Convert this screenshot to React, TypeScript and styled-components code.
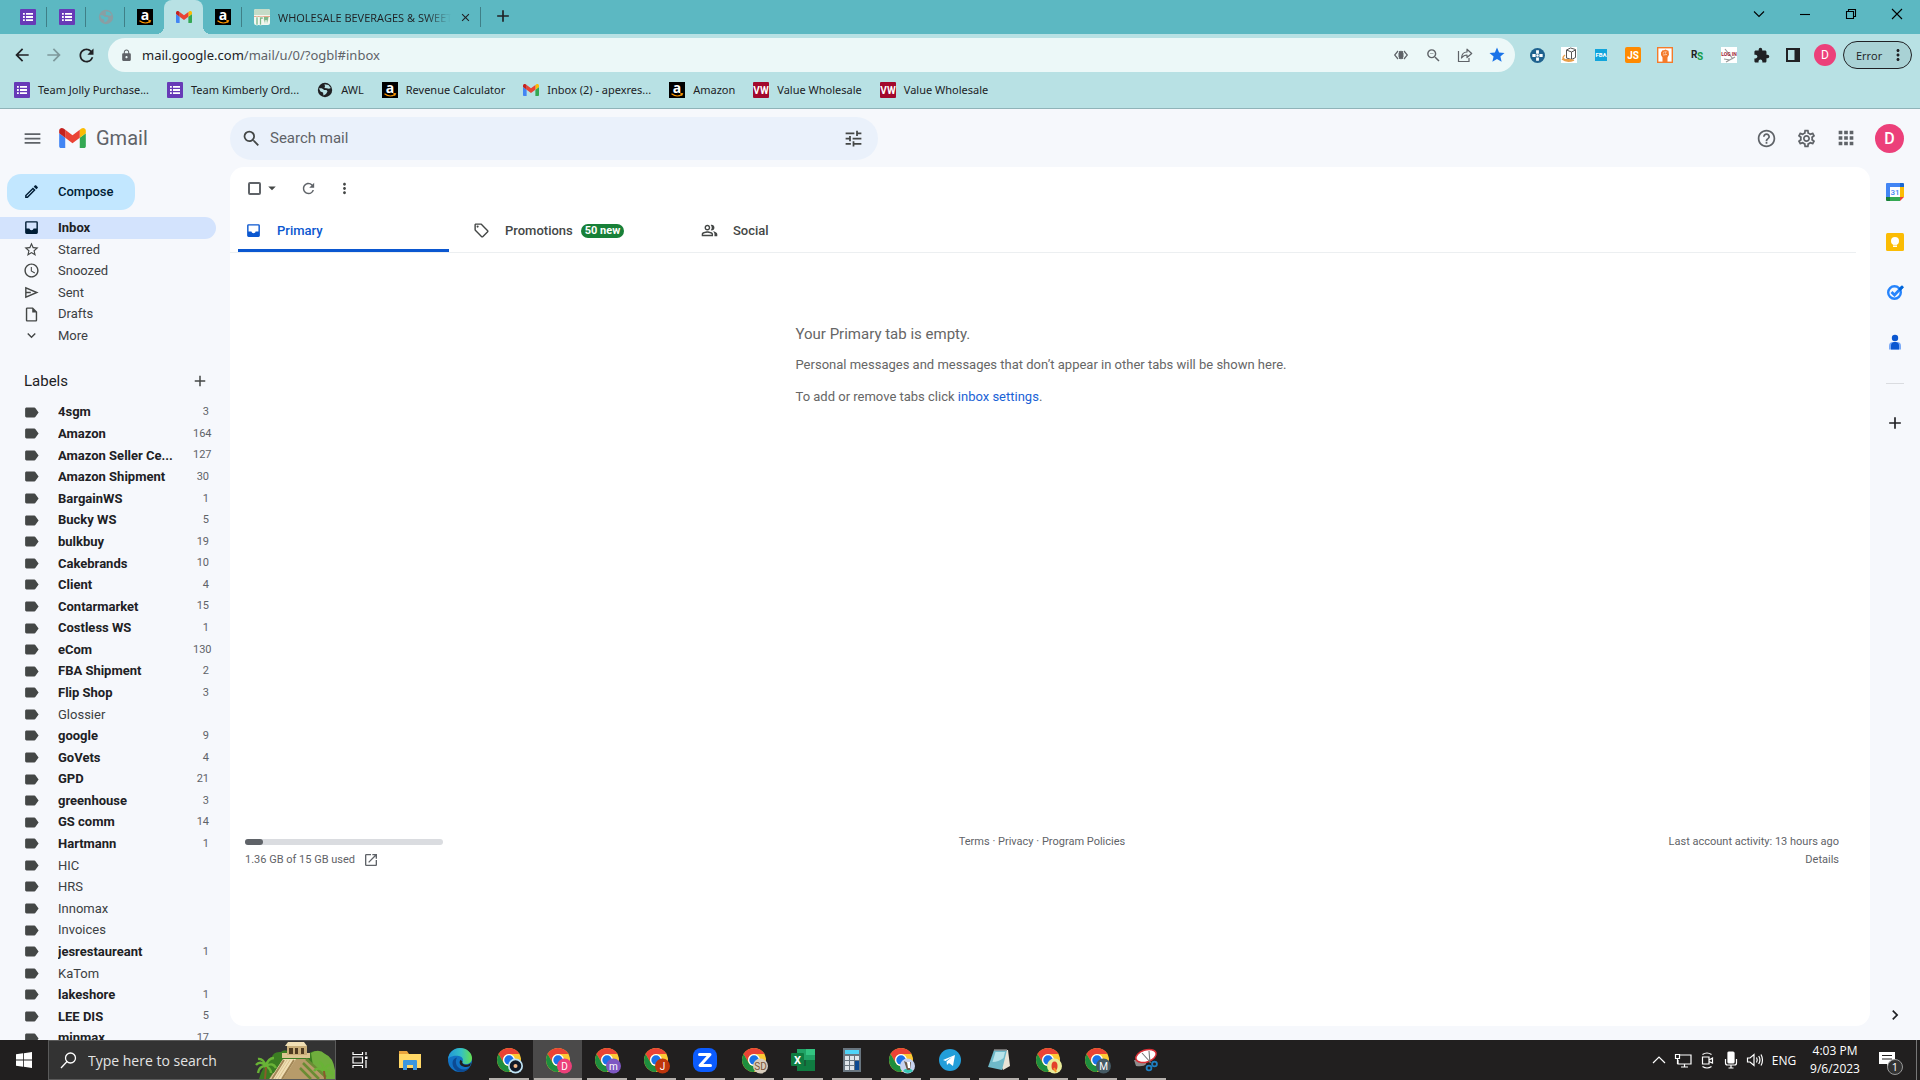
import React from "react";
import styled, { createGlobalStyle, css } from "styled-components";
import {
  MdMenu, MdSearch, MdTune, MdHelpOutline, MdOutlineSettings, MdApps, MdStarBorder, MdAccessTime,
  MdOutlineInsertDriveFile, MdExpandMore, MdAdd, MdLabel, MdRefresh, MdMoreVert, MdArrowDropDown,
  MdOutlineLocalOffer, MdOutlinePeopleAlt, MdOpenInNew, MdChevronRight, MdLock, MdArrowBack, MdArrowForward,
  MdExtension, MdStar, MdOutlineCreate, MdClose, MdOutlineZoomOut,
} from "react-icons/md";

const browserFont = `"Noto Sans", "Open Sans", sans-serif`;
const systemFont = `"Open Sans", "Noto Sans", sans-serif`;
const product = `Roboto, "Liberation Sans", sans-serif`;

const Global = createGlobalStyle`
  *, *::before, *::after { box-sizing: border-box; }
  html, body { margin: 0; padding: 0; }
  body { overflow: hidden; font-family: ${product}; }
  button, input { font: inherit; color: inherit; margin: 0; padding: 0; border: 0; background: none; }
  button { cursor: pointer; }
  input { outline: none; min-width: 0; }
  a { text-decoration: none; color: inherit; }
  svg { display: block; flex: none; overflow: visible; }
`;

/* ---------- shared ---------- */
const Screen = styled.div`
  height: 100vh;
  display: flex;
  flex-direction: column;
`;
const center = css`
  display: flex;
  align-items: center;
  justify-content: center;
`;
const Slot = styled.button<{ $w: number; $color?: string }>`
  ${center}
  width: ${(p) => p.$w}px;
  height: 32px;
  flex: none;
  color: ${(p) => p.$color ?? "#202124"};
`;
const Avatar = styled.span<{ $size: number }>`
  ${center}
  width: ${(p) => p.$size}px;
  height: ${(p) => p.$size}px;
  border-radius: 50%;
  background: #ec407a;
  color: #fff;
  font-family: ${product};
  font-size: ${(p) => (p.$size > 24 ? 16 : 12)}px;
  font-weight: ${(p) => (p.$size > 24 ? 500 : 400)};
`;

/* ---------- browser chrome ---------- */
const TabStrip = styled.div`
  height: 34px;
  display: flex;
  align-items: stretch;
  padding-left: 8px;
  background: #5cb8c2;
  font-family: ${systemFont};
`;
const Tab = styled.button<{ $active?: boolean; $wide?: boolean; $line?: boolean }>`
  position: relative;
  display: flex;
  align-items: center;
  justify-content: ${(p) => (p.$wide ? "flex-start" : "center")};
  gap: 8px;
  width: ${(p) => (p.$wide ? 239 : 39)}px;
  padding: ${(p) => (p.$wide ? "0 9px 0 12px" : "0")};
  color: #202124;
  font-size: 11px;
  background: ${(p) =>
    p.$active
      ? "#b8e1e4"
      : p.$line
        ? "linear-gradient(#3f7f87, #3f7f87) right center / 1px 20px no-repeat"
        : "none"};
  border-radius: ${(p) => (p.$active ? "8px 8px 0 0" : "0")};
  ${(p) =>
    p.$active &&
    css`
      &::before,
      &::after {
        content: "";
        position: absolute;
        bottom: 0;
        width: 8px;
        height: 8px;
      }
      &::before { right: 100%; background: radial-gradient(circle at 0 0, transparent 8px, #b8e1e4 8px); }
      &::after { left: 100%; background: radial-gradient(circle at 100% 0, transparent 8px, #b8e1e4 8px); }
    `}
`;
const TabTitle = styled.span`
  flex: 1;
  overflow: hidden;
  white-space: nowrap;
  text-align: left;
  mask-image: linear-gradient(90deg, #000 85%, transparent);
`;
const Spacer = styled.div`
  flex: 1;
`;
const WinButton = styled.button`
  ${center}
  width: 46px;
  height: 28px;
  color: #000;
`;
const AddressRow = styled.div`
  height: 42px;
  display: flex;
  align-items: center;
  padding: 0 8px 0 6px;
  background: #b8e1e4;
`;
const Omnibox = styled.div`
  flex: 1;
  display: flex;
  align-items: center;
  height: 34px;
  margin: 0 6px;
  padding: 0 2px 0 12px;
  border-radius: 17px;
  background: #ecf8f8;
  font-family: ${browserFont};
  font-size: 13px;
  color: #5f6368;
  svg { color: #5f6368; }
`;
const Url = styled.span`
  flex: 1;
  margin-left: 9px;
  b { font-weight: 400; color: #202124; }
`;
const StarSlot = styled(Slot)`
  svg { color: #1a73e8; }
`;
const ErrorButton = styled.button`
  display: flex;
  align-items: center;
  justify-content: space-between;
  width: 69px;
  height: 28px;
  padding: 0 4px 0 12px;
  margin-left: 2px;
  border: 1px solid #202124;
  border-radius: 14px;
  background: #a9d2d5;
  color: #202124;
  font-family: ${systemFont};
  font-size: 11px;
`;
const Bookmarks = styled.nav`
  height: 33px;
  display: flex;
  align-items: center;
  gap: 18px;
  padding: 0 14px 5px;
  background: #b8e1e4;
  border-bottom: 1px solid #8fb3b8;
  font-family: ${browserFont};
  font-size: 11px;
  color: #202124;
`;
const Bookmark = styled.a`
  display: flex;
  align-items: center;
  gap: 8px;
  white-space: nowrap;
`;

/* ---------- mail ---------- */
const Mail = styled.div`
  flex: 1;
  min-height: 0;
  display: grid;
  grid-template-columns: 230px 1fr 50px;
  grid-template-rows: 58px 1fr;
  overflow: hidden;
  background: #f6f8fc;
  color: #202124;
`;
const Brand = styled.div`
  display: flex;
  align-items: center;
  gap: 11px;
  padding-left: 16px;
`;
const BrandLink = styled.a`
  display: flex;
  align-items: center;
  gap: 10px;
  color: #5f6368;
  font-size: 20px;
`;
const Header = styled.header`
  grid-column: 2 / 4;
  display: flex;
  align-items: center;
  justify-content: space-between;
  padding-right: 16px;
`;
const SearchForm = styled.form`
  display: flex;
  align-items: center;
  flex: 0 1 648px;
  height: 43px;
  padding: 0 6px 0 2px;
  border-radius: 22px;
  background: #eaf1fb;
  input { flex: 1; font-size: 15px; color: #5f6368; }
  input::placeholder { color: #5f6368; opacity: 1; }
`;
const HeaderActions = styled.div`
  display: flex;
  align-items: center;
`;
const AvatarButton = styled.button`
  margin-left: 9px;
`;
const Sidebar = styled.aside`
  min-height: 0;
  overflow: hidden;
  padding-top: 7px;
  font-size: 13px;
`;
const Compose = styled.button`
  display: flex;
  align-items: center;
  gap: 18px;
  height: 36px;
  margin: 0 0 7px 7px;
  padding: 0 21px 2px 16px;
  border-radius: 14px;
  background: #c2e7ff;
  color: #001d35;
  font-weight: 500;
`;
const List = styled.nav`
  margin-right: 14px;
  line-height: 1.66;
`;
const Item = styled.a<{ $active?: boolean; $bold?: boolean }>`
  display: grid;
  grid-template-columns: 17px 117px 1fr;
  column-gap: 18px;
  align-items: center;
  padding: 0 7px 0 23px;
  border-radius: 0 11px 11px 0;
  background: ${(p) => (p.$active ? "#d3e3fd" : "none")};
  color: ${(p) => (p.$active || p.$bold ? "#202124" : "#3c4043")};
  font-weight: ${(p) => (p.$active || p.$bold ? 700 : 400)};
  white-space: nowrap;
  svg { color: ${(p) => (p.$active ? "#001d35" : "#444746")}; }
`;
const Name = styled.span`
  overflow: hidden;
  text-overflow: ellipsis;
`;
const Count = styled.span`
  justify-self: end;
  font-size: 11px;
  line-height: 16px;
  font-weight: 400;
  color: #5f6368;
`;
const LabelsHead = styled.div`
  display: flex;
  align-items: center;
  justify-content: space-between;
  height: 32px;
  margin: 19px 14px 4px 24px;
  h2 { margin: 0; font-size: 15px; font-weight: 400; }
`;
const Panel = styled.main`
  display: flex;
  flex-direction: column;
  margin-bottom: 14px;
  border-radius: 14px;
  background: #fff;
`;
const Tools = styled.div`
  display: flex;
  align-items: center;
  height: 42px;
  padding-left: 18px;
`;
const Check = styled.input`
  appearance: none;
  width: 13px;
  height: 13px;
  border: 2px solid #5f6368;
  border-radius: 2px;
`;
const Categories = styled.div`
  display: flex;
  height: 44px;
  margin-right: 14px;
  padding-left: 8px;
  border-bottom: 1px solid #eceff1;
`;
const Category = styled.button<{ $active?: boolean }>`
  display: flex;
  align-items: center;
  width: 211px;
  margin-right: 17px;
  padding: 3px 0 0 7px;
  border-bottom: 3px solid ${(p) => (p.$active ? "#0b57d0" : "transparent")};
  border-radius: 2px 2px 0 0;
  color: ${(p) => (p.$active ? "#0b57d0" : "#444746")};
  font-size: 13px;
  font-weight: 500;
  span { margin-left: 15px; }
`;
const Badge = styled.em`
  margin-left: 8px;
  padding: 0 4px;
  border-radius: 7px;
  background: #188038;
  color: #fff;
  font-size: 11px;
  line-height: 14px;
  font-style: normal;
  font-weight: 700;
`;
const Content = styled.div`
  margin-right: 23px;
  padding: 0 8px 0 15px;
`;
const Empty = styled.section`
  width: 493px;
  margin: 72px auto 0;
  padding-bottom: 412px;
  color: #666;
  font-size: 13px;
  h3 { margin: 0 0 14px; font-size: 15px; line-height: 18px; font-weight: 400; }
  p { margin: 0 0 16px; line-height: 16px; white-space: nowrap; }
  a { color: #1a62d6; }
`;
const Footer = styled.footer`
  display: grid;
  grid-template-columns: 1fr auto 1fr;
  color: #5f6368;
  font-size: 11px;
  line-height: 18px;
`;
const Meter = styled.div`
  width: 198px;
  height: 6px;
  margin: 6px 0;
  border-radius: 3px;
  background: #dadce0;
`;
const MeterFill = styled.div`
  width: 9%;
  height: 100%;
  border-radius: 3px;
  background: #5f6368;
`;
const Storage = styled.a`
  display: flex;
  align-items: center;
  gap: 8px;
`;
const Activity = styled.div`
  text-align: right;
`;
const Rail = styled.aside`
  display: flex;
  flex-direction: column;
  align-items: center;
`;
const RailButton = styled.button`
  ${center}
  width: 50px;
  height: 50px;
`;
const RailLine = styled.hr`
  width: 18px;
  margin: 16px 0 14px;
  border: 0;
  border-top: 1px solid #dadce0;
`;

/* ---------- taskbar ---------- */
const Taskbar = styled.footer`
  height: 40px;
  flex: none;
  display: flex;
  background: #211f1f;
  color: #fff;
  font-family: ${systemFont};
`;
const TaskButton = styled.button<{ $w?: number; $running?: boolean; $active?: boolean }>`
  ${center}
  width: ${(p) => p.$w ?? 49}px;
  height: 40px;
  background:
    ${(p) => (p.$running ? `linear-gradient(#b5b0ac, #b5b0ac) center bottom / ${p.$active ? 48 : 40}px 2px no-repeat` : "none")},
    ${(p) => (p.$active ? "#4b4a4a" : "transparent")};
`;
const TaskSearch = styled.label`
  display: flex;
  align-items: center;
  width: 288px;
  padding-left: 11px;
  gap: 11px;
  border: 1px solid #5a5a5a;
  background: #333;
  font-size: 14px;
  input { flex: 1; }
  input::placeholder { color: #e4e4e4; opacity: 1; }
`;
const TrayItem = styled.button`
  ${center}
  width: 24px;
  height: 40px;
`;
const Lang = styled.button`
  width: 34px;
  font-size: 12px;
`;
const Clock = styled.div`
  display: flex;
  flex-direction: column;
  justify-content: center;
  width: 68px;
  text-align: center;
  font-size: 12px;
  line-height: 18px;
`;
const Notify = styled.button`
  ${center}
  width: 48px;
  margin-right: 3px;
  padding-right: 5px;
  border-right: 1px solid #777;
`;

/* ---------- drawings ---------- */
const GmailMark = ({ w }: { w: number }) => (
  <svg width={w} height={Math.round(w * 0.75)} viewBox="52 42 88 66">
    <path fill="#4285f4" d="M58 108h14V74L52 59v43c0 3.32 2.69 6 6 6" />
    <path fill="#34a853" d="M120 108h14c3.32 0 6-2.69 6-6V59l-20 15" />
    <path fill="#fbbc04" d="M120 48v26l20-15v-8c0-7.42-8.47-11.65-14.4-7.2" />
    <path fill="#ea4335" d="M72 74V48l24 18 24-18v26L96 92" />
    <path fill="#c5221f" d="M52 51v8l20 15V48l-5.6-4.2c-5.94-4.45-14.4-.22-14.4 7.2" />
  </svg>
);
const FormMark = () => (
  <svg width="16" height="16" viewBox="0 0 16 16">
    <rect width="16" height="16" rx="1" fill="#673ab7" />
    <g fill="#fff"><path d="M3 4h1.8v1.8H3zM3 7.1h1.8v1.8H3zM3 10.2h1.8V12H3zM6 4h7v1.8H6zM6 7.1h7v1.8H6zM6 10.2h7V12H6z" /></g>
  </svg>
);
const Globe = ({ color, land }: { color: string; land: string }) => (
  <svg width="16" height="16" viewBox="0 0 16 16">
    <circle cx="8" cy="8" r="7.200" fill={color} />
    <path d="M2 6.500C4 6 6 6.500 7 8h2.500l1 1.500-1.500 2.500-2.500 1.500-.5-3-2.500-1z" fill={land} />
    <path d="M7.500 2.300l4 .7 2.300 3-1.800.8-2.500-.5-2-.3.500-1.700z" fill={land} />
  </svg>
);
const AmazonMark = () => (
  <svg width="16" height="16" viewBox="0 0 16 16">
    <rect width="16" height="16" fill="#000" />
    <text x="8" y="10.5" fontSize="14" fontWeight="700" fontFamily="Open Sans, sans-serif" textAnchor="middle" fill="#fff">a</text>
    <path d="M2.5 11.8c3.2 2.4 7.5 2.5 10.5.7M11.4 11.6l2.1.2-.8 1.8" fill="none" stroke="#f90" strokeWidth="1.1" />
  </svg>
);
const TextMark = ({ text, bg, fg = "#fff", size = 8, w = 16, h = 16, r = 1 }: { text: string; bg: string; fg?: string; size?: number; w?: number; h?: number; r?: number }) => (
  <svg width={w} height={h} viewBox={`0 0 ${w} ${h}`}>
    <rect width={w} height={h} rx={r} fill={bg} />
    <text x={w / 2} y={h / 2 + size * 0.36} fontSize={size} fontWeight="700" fontFamily="Roboto, sans-serif" textAnchor="middle" fill={fg}>{text}</text>
  </svg>
);
const IrwMark = () => (
  <svg width="16" height="16" viewBox="0 0 16 16">
    <rect width="16" height="16" rx="2" fill="#f3f7ee" />
    <path d="M0 2q0-2 2-2h12q2 0 2 2v4H0z" fill="#c5dcc8" />
    <path d="M0 7.5h16" stroke="#e7a98c" strokeWidth="1" />
    <path d="M2 16V8h2v8zM5.500 16V8h4v2h-2v6zM9 8l2 8 1-5 1 5 2-8" fill="#7db98a" stroke="#fff" strokeWidth=".6" />
  </svg>
);
const Win = ({ d }: { d: string }) => (
  <svg width="12" height="12" viewBox="0 0 12 12" fill="none" stroke="#000" strokeWidth="1.1"><path d={d} /></svg>
);
const Eye = () => (
  <svg width="14" height="14" viewBox="0 0 14 14" fill="none" stroke="currentColor" strokeWidth="1.200">
    <path d="M4 3L.7 7 4 11M10 3l3.300 4-3.300 4" /><path d="M7 2.500L9.500 5v4L7 11.500 4.500 9V5z" fill="currentColor" stroke="none" />
    <path d="M5.700 3v8M8.300 3v8" />
  </svg>
);
const Share = () => (
  <svg width="16" height="16" viewBox="0 0 16 16" fill="none" stroke="currentColor" strokeWidth="1.2">
    <path d="M1.500 4v10.500H12V11" /><path d="M4.500 11c.3-4 2.500-6 5.500-6V2.200L14.700 6.500 10 10.500V8C7.500 8 6 9 4.500 11z" strokeLinejoin="round" />
  </svg>
);
const Compass = () => (
  <svg width="15" height="15" viewBox="0 0 16 16">
    <circle cx="8" cy="8" r="8" fill="#1f628e" />
    <path d="M6.500 2.500h3v3.500h-3zM6.500 10h3v3.500h-3zM2.500 6.500H6v3H2.500zM10 6.500h3.500v3H10z" fill="#fff" />
    <circle cx="8" cy="8" r="1.300" fill="#fff" />
  </svg>
);
const BoxMark = () => (
  <svg width="16" height="16" viewBox="0 0 16 16">
    <rect width="16" height="16" fill="#fff" />
    <path d="M5.500 3l4-2 5 1.500v8l-4 2-5-1.500zM10.500 5v7M5.500 3l5 2 4-2" fill="none" stroke="#555" strokeWidth="1" />
    <path d="M1 12q5 4 12 1M4 8q-4 3 0 4.500l7 .500" fill="none" stroke="#e9a04b" strokeWidth="1.400" />
  </svg>
);
const Fist = () => (
  <svg width="16" height="16" viewBox="0 0 16 16">
    <rect x=".7" y=".7" width="14.600" height="14.600" fill="#fff" stroke="#f47b2a" strokeWidth="1.400" />
    <path d="M4 5.500l1.500-2.300 1.500.1L8.500 2.500l1.500.7 1.500.6.5 4L10.500 10.500V15h-5v-4.500L4 8z" fill="#f47b2a" />
    <path d="M6.300 6.500l1-2M8.500 6.500l.5-2.500M6 8l4-.5" stroke="#fff" strokeWidth=".6" />
  </svg>
);
const RsMark = () => (
  <svg width="16" height="16" viewBox="0 0 16 16" fontFamily="Roboto, sans-serif" fontWeight="700">
    <text x="2" y="11" fontSize="10" fill="#222">R</text><text x="8" y="13" fontSize="10" fill="#139b49">S</text>
  </svg>
);
const LoginMark = () => (
  <svg width="16" height="16" viewBox="0 0 16 16">
    <rect width="16" height="16" fill="#fff" />
    <path d="M14 10L5 15M3 12l6 1M4 2l8 10" stroke="#999" strokeWidth="1.200" />
    <text x="8" y="8.500" fontSize="5" fontWeight="700" fontFamily="Roboto, sans-serif" textAnchor="middle" fill="#9c2033">LOG IN</text>
  </svg>
);
const SidePanel = () => (
  <svg width="14" height="14" viewBox="0 0 14 14"><path fillRule="evenodd" d="M0 0h14v14H0zM2 2v10h6.500V2z" fill="#202124" /></svg>
);
const InboxFilled = ({ size = 17 }: { size?: number }) => (
  <svg width={size} height={size} viewBox="0 0 24 24" fill="currentColor">
    <path fillRule="evenodd" d="M5 3h14q2 0 2 2v14q0 2-2 2H5q-2 0-2-2V5q0-2 2-2zM5 5v8.500h4q.5 2.500 3 2.500t3-2.500h4V5z" />
  </svg>
);
const SendOutline = ({ size = 17 }: { size?: number }) => (
  <svg width={size} height={size} viewBox="0 0 24 24" fill="none" stroke="currentColor" strokeWidth="2">
    <path d="M4 5.500v13L19.500 12zM4 12h7" />
  </svg>
);
const Calendar = () => (
  <svg width="18" height="18" viewBox="0 0 18 18">
    <path d="M1 0h13v4H4v10H0V1q0-1 1-1z" fill="#4285f4" />
    <path d="M14 0h3q1 0 1 1v3h-4z" fill="#1967d2" /><path d="M14 4h4v10h-4z" fill="#fbbc04" />
    <path d="M4 14h10v4H4z" fill="#34a853" /><path d="M0 14h4v4H1q-1 0-1-1z" fill="#188038" />
    <path d="M14 14h4l-4 4z" fill="#ea4335" /><path d="M4 4h10v10H4z" fill="#fff" />
    <text x="9" y="12" fontSize="8" fontWeight="500" fontFamily="Roboto, sans-serif" textAnchor="middle" fill="#4285f4">31</text>
  </svg>
);
const Keep = () => (
  <svg width="18" height="18" viewBox="0 0 18 18">
    <rect width="18" height="18" rx="1.500" fill="#fbbc04" />
    <circle cx="9" cy="8" r="4" fill="#fff" /><path d="M7 10.500h4V14H7z" fill="#fff" /><path d="M7 12.300h4" stroke="#fbbc04" strokeWidth=".6" />
  </svg>
);
const Tasks = () => (
  <svg width="18" height="18" viewBox="0 0 18 18" fill="none" stroke="#2684fc">
    <circle cx="8.500" cy="9.500" r="6.300" strokeWidth="2.400" />
    <path d="M5.500 9l3 3 7.800-8.200" strokeWidth="2.800" /><path d="M13.300 7l3.700-3.800" stroke="#0066da" strokeWidth="2.800" />
  </svg>
);
const Contacts = () => (
  <svg width="16" height="18" viewBox="0 0 16 18">
    <circle cx="8" cy="5" r="3.200" fill="#0b57d0" /><path d="M2 16.500v-3.500q0-4 4-4h4q4 0 4 4v3.500z" fill="#7baaf7" />
    <path d="M4 16.500v-4q0-3 3-3.500h2q3 .5 3 3.500v4z" fill="#0b57d0" />
  </svg>
);
const Ruins = () => (
  <svg width="80" height="38" viewBox="0 0 80 38">
    <path d="M4 38q4-14 12-20 2-8 10-7 4-4 10 1h18q8-4 12 0 8 0 12 13l2 8v5z" fill="#3b7d22" />
    <path d="M56 12q8-5 14 1 8 3 10 16v9H60z" fill="#6fae3d" />
    <path d="M14 38l4-6h5l2-6h5l3-8h20l4 6 5 5 5 5 4 4z" fill="#b79b6a" />
    <path d="M27 12h28v5H27z" fill="#dcc591" /><path d="M32 5h20v9H32z" fill="#c9ae78" />
    <path d="M33 1h16l3 4H30z" fill="#f0dfb4" />
    <path d="M34 7h4v6h-4zM40 7h3v6h-3zM46 7h3v6h-3z" fill="#4f3b20" />
    <path d="M51 18l20 18M48 22l16 16M45 27l11 11" stroke="#6a8c34" strokeWidth="2.500" />
    <path d="M28 18h13L28 38H15z" fill="#f0dfb4" />
    <path d="M29 19L17 38M39 19L27 38" stroke="#a38757" strokeWidth="2" />
    <path d="M35 19L23 38M32 19L20 38" stroke="#d3bb87" strokeWidth=".8" />
    <g stroke="#69b336" strokeWidth="2.400" fill="none">
      <path d="M11 25q-6-6-10-1M11 25q-3-8-8-7M11 25q2-8 8-8M11 25q7-4 10 2M11 25q-7 0-8 7M11 25q5 3 5 7" />
      <path d="M69 30q-6-5-10 0M69 30q-1-8-5-9M69 30q3-7 7-6M69 30q5-2 9 4" />
    </g>
    <path d="M11 26l-1 12M69 30l1 8" stroke="#8a5a2c" strokeWidth="2" />
  </svg>
);
const Chrome = ({ badge, fg = "#fff", children }: { badge: string; fg?: string; children?: React.ReactNode }) => (
  <svg width="24" height="32" viewBox="0 0 24 32">
    <g transform="translate(0 4)">
      <circle cx="12" cy="12" r="12" fill="#fcc934" />
      <path d="M12 6H22.390A12 12 0 0 0 1.610 6L6.800 15A6 6 0 0 1 12 6z" fill="#ea4335" />
      <path d="M1.610 6A12 12 0 0 0 12 24L17.200 15A6 6 0 0 1 6.800 15z" fill="#1e8e3e" />
      <circle cx="12" cy="12" r="6" fill="#fff" /><circle cx="12" cy="12" r="4.700" fill="#1a73e8" />
    </g>
    <circle cx="18.500" cy="22" r="7.500" fill={badge} />
    {typeof children === "string" ? (
      <text x="18.500" y="25.500" fontSize="10" fontFamily="Roboto, sans-serif" textAnchor="middle" fill={fg}>{children}</text>
    ) : children}
  </svg>
);
const Edge = () => (
  <svg width="24" height="24" viewBox="0 0 24 24">
    <defs>
      <linearGradient id="edgeTop" x1="0" x2="1"><stop offset="0" stopColor="#2196d8" /><stop offset=".55" stopColor="#35c1c4" /><stop offset="1" stopColor="#66e04f" /></linearGradient>
    </defs>
    <circle cx="12" cy="12" r="12" fill="#1272c4" />
    <path d="M0 11C1 4 6 0 12 0c7 0 12 5 12 10 0 4-3 6-6 6-3 0-4.500-1-3.500-2.500S15 9 11 8C6 6.800 1 9 0 11z" fill="url(#edgeTop)" />
    <path d="M9 9.500c-3 5 0 12 7 12 3 0 5-1.500 6.500-3.500C19 25 10 26 6 20 3 15 5 10 9 9.500z" fill="#0c4a93" />
    <path d="M14.500 13.500C13.500 15.500 16 17 19 16.700c1.700-.2 3-.9 4-2l-1 3.300q-3 1.300-6 .7c-4-.8-5.500-4-3.500-7z" fill="#211f1f" />
  </svg>
);
const Explorer = () => (
  <svg width="22" height="20" viewBox="0 0 22 20">
    <path d="M0 1h8l2 3h11v14H0z" fill="#e8a33d" /><path d="M0 4h22v14H0z" fill="#ffd766" />
    <path d="M4 20v-9q0-1 1-1h12q1 0 1 1v9h-4v-5H8v5z" fill="#3a96dd" />
  </svg>
);
const ZoomMark = () => (
  <svg width="24" height="24" viewBox="0 0 24 24">
    <rect width="24" height="24" rx="8" fill="#0b5cff" /><path d="M6.500 6.500h10.500L7 17.500H17.500" fill="none" stroke="#fff" strokeWidth="3" strokeLinejoin="round" strokeLinecap="round" />
  </svg>
);
const Excel = () => (
  <svg width="24" height="22" viewBox="0 0 24 22">
    <path d="M6 0h9v22H6z" fill="#21a366" /><path d="M15 0h9v6h-9z" fill="#33c481" /><path d="M15 6h9v5h-9z" fill="#21a366" />
    <path d="M6 11h18v11H6z" fill="#107c41" /><path d="M6 11h9v6H6z" fill="#185c37" />
    <rect y="4" width="13" height="13" rx="1" fill="#107c41" />
    <text x="6.500" y="14.500" fontSize="11" fontWeight="700" fontFamily="Roboto, sans-serif" textAnchor="middle" fill="#fff">X</text>
  </svg>
);
const Calc = () => (
  <svg width="18" height="24" viewBox="0 0 18 24">
    <rect width="18" height="24" fill="#69757f" /><path d="M2 2h14v4H2z" fill="#4fd3f7" />
    <path d="M2 8h4v4H2zM7 8h4v4H7zM12 8h4v4h-4zM2 13h4v4H2zM7 13h4v4H7zM2 18h4v4H2zM7 18h4v4H7z" fill="#dfe5ea" />
    <path d="M12 13h4v9h-4z" fill="#0d4a92" />
  </svg>
);
const Telegram = () => (
  <svg width="22" height="22" viewBox="0 0 22 22">
    <circle cx="11" cy="11" r="11" fill="#229ed9" /><path d="M4 11l12-5-2 11-4-3-2 2-.5-3.500 5.500-4.500-6.500 4z" fill="#fff" />
  </svg>
);
const Notepad = () => (
  <svg width="24" height="24" viewBox="0 0 24 24">
    <path d="M7 2h14l2 16-7 4z" fill="#e9e3d6" /><path d="M7 2h13l-5 20-14-3z" fill="#6fb9c9" /><path d="M8.500 4h9.500l-1.500 6q-5 4-11 4z" fill="#b8e3ea" />
    <path d="M7 2h13" stroke="#888" strokeWidth="1.500" />
  </svg>
);
const Snip = () => (
  <svg width="24" height="24" viewBox="0 0 24 24">
    <path d="M0 12l2 6q8 1 10-2l1-4z" fill="#8d8d8d" />
    <ellipse cx="12" cy="8" rx="10.500" ry="6" fill="#fff" stroke="#d92f36" strokeWidth="1.500" transform="rotate(-18 12 8)" />
    <path d="M8 5l9 10M15 3l1 12" stroke="#777" strokeWidth="1.100" />
    <g fill="none" stroke="#1e7fc2" strokeWidth="1.800"><circle cx="15" cy="20" r="2.400" /><circle cx="20.500" cy="16" r="2.400" /></g>
  </svg>
);
const TrayIcon = ({ children }: { children: React.ReactNode }) => (
  <svg width="18" height="18" viewBox="0 0 18 18" fill="none" stroke="#fff" strokeWidth="1.200">{children}</svg>
);

/* ---------- data ---------- */
const folders: [React.ComponentType<{ size?: number }>, string][] = [
  [InboxFilled, "Inbox"], [MdStarBorder, "Starred"], [MdAccessTime, "Snoozed"],
  [SendOutline, "Sent"], [MdOutlineInsertDriveFile, "Drafts"], [MdExpandMore, "More"],
];
const labels: [string, number?][] = [
  ["4sgm", 3], ["Amazon", 164], ["Amazon Seller Ce...", 127], ["Amazon Shipment", 30], ["BargainWS", 1], ["Bucky WS", 5],
  ["bulkbuy", 19], ["Cakebrands", 10], ["Client", 4], ["Contarmarket", 15], ["Costless WS", 1], ["eCom", 130],
  ["FBA Shipment", 2], ["Flip Shop", 3], ["Glossier"], ["google", 9], ["GoVets", 4], ["GPD", 21], ["greenhouse", 3],
  ["GS comm", 14], ["Hartmann", 1], ["HIC"], ["HRS"], ["Innomax"], ["Invoices"], ["jesrestaureant", 1], ["KaTom"],
  ["lakeshore", 1], ["LEE DIS", 5], ["minmax", 17],
];
const bookmarks: [React.ReactNode, string][] = [
  [<FormMark />, "Team Jolly Purchase..."], [<FormMark />, "Team Kimberly Ord..."], [<Globe color="#202124" land="#b8e1e4" />, "AWL"],
  [<AmazonMark />, "Revenue Calculator"], [<GmailMark w={16} />, "Inbox (2) - apexres..."], [<AmazonMark />, "Amazon"],
  [<TextMark text="VW" bg="#a3082c" size={10} />, "Value Wholesale"], [<TextMark text="VW" bg="#a3082c" size={10} />, "Value Wholesale"],
];
const extensions: [string, React.ReactNode][] = [
  ["Compass", <Compass />], ["Box", <BoxMark />], ["FBA", <TextMark text="FBA" bg="#12a5dc" size={6} w={12} h={12} r={0} />],
  ["JS", <TextMark text="JS" bg="#ff8a00" size={10} r={2} />], ["Fist", <Fist />], ["RS", <RsMark />],
  ["Login", <LoginMark />], ["Extensions", <MdExtension size={17} />], ["Side panel", <SidePanel />],
];

export default function App() {
  return (
    <Screen>
      <Global />
      <TabStrip>
        <Tab $line aria-label="Form"><FormMark /></Tab>
        <Tab $line aria-label="Form"><FormMark /></Tab>
        <Tab $line aria-label="Page"><Globe color="#8a9ea3" land="#5cb8c2" /></Tab>
        <Tab aria-label="Amazon"><AmazonMark /></Tab>
        <Tab $active aria-label="Gmail"><GmailMark w={16} /></Tab>
        <Tab $line aria-label="Amazon"><AmazonMark /></Tab>
        <Tab $line $wide>
          <IrwMark />
          <TabTitle>WHOLESALE BEVERAGES &amp; SWEETS</TabTitle>
          <MdClose size={13} />
        </Tab>
        <Slot $w={44} aria-label="New tab"><MdAdd size={20} /></Slot>
        <Spacer />
        <WinButton aria-label="Search tabs"><Win d="M1 3.500l5 5 5-5" /></WinButton>
        <WinButton aria-label="Minimize"><Win d="M1 6.500h10" /></WinButton>
        <WinButton aria-label="Restore"><Win d="M1.500 3.500h7v7h-7zM3.500 3.500v-2h7v7h-2" /></WinButton>
        <WinButton aria-label="Close"><Win d="M1 1l10 10M11 1L1 11" /></WinButton>
      </TabStrip>
      <AddressRow>
        <Slot $w={32} aria-label="Back"><MdArrowBack size={20} /></Slot>
        <Slot $w={32} $color="#7d989b" aria-label="Forward"><MdArrowForward size={20} /></Slot>
        <Slot $w={32} aria-label="Reload"><MdRefresh size={21} /></Slot>
        <Omnibox>
          <MdLock size={13} />
          <Url><b>mail.google.com</b>/mail/u/0/?ogbl#inbox</Url>
          <Slot $w={32} aria-label="View"><Eye /></Slot>
          <Slot $w={32} aria-label="Zoom"><MdOutlineZoomOut size={17} /></Slot>
          <Slot $w={32} aria-label="Share"><Share /></Slot>
          <StarSlot $w={32} aria-label="Bookmark"><MdStar size={18} /></StarSlot>
        </Omnibox>
        {extensions.map(([name, icon]) => <Slot $w={32} key={name} aria-label={name}>{icon}</Slot>)}
        <Slot $w={32} aria-label="Profile"><Avatar $size={22}>D</Avatar></Slot>
        <ErrorButton>Error<MdMoreVert size={18} /></ErrorButton>
      </AddressRow>
      <Bookmarks>
        {bookmarks.map(([icon, name], i) => <Bookmark href="#" key={i}>{icon}{name}</Bookmark>)}
      </Bookmarks>

      <Mail>
        <Brand>
          <Slot $w={32} $color="#5f6368" aria-label="Main menu"><MdMenu size={21} /></Slot>
          <BrandLink href="#"><GmailMark w={27} />Gmail</BrandLink>
        </Brand>
        <Header>
          <SearchForm role="search">
            <Slot $w={38} $color="#444746" type="button" aria-label="Search"><MdSearch size={21} /></Slot>
            <input type="text" aria-label="Search mail" placeholder="Search mail" />
            <Slot $w={38} $color="#444746" type="button" aria-label="Search options"><MdTune size={21} /></Slot>
          </SearchForm>
          <HeaderActions>
            <Slot $w={40} $color="#5f6368" aria-label="Support"><MdHelpOutline size={21} /></Slot>
            <Slot $w={40} $color="#5f6368" aria-label="Settings"><MdOutlineSettings size={21} /></Slot>
            <Slot $w={40} $color="#5f6368" aria-label="Google apps"><MdApps size={22} /></Slot>
            <AvatarButton aria-label="Account"><Avatar $size={29}>D</Avatar></AvatarButton>
          </HeaderActions>
        </Header>

        <Sidebar>
          <Compose><MdOutlineCreate size={17} />Compose</Compose>
          <List aria-label="Folders">
            {folders.map(([Icon, name], i) => (
              <Item href="#" key={name} $active={i === 0}><Icon size={17} /><Name>{name}</Name></Item>
            ))}
          </List>
          <LabelsHead>
            <h2>Labels</h2>
            <Slot $w={32} $color="#444746" aria-label="Create label"><MdAdd size={18} /></Slot>
          </LabelsHead>
          <List aria-label="Labels">
            {labels.map(([name, n]) => (
              <Item href="#" key={name} $bold={n !== undefined}>
                <MdLabel size={17} /><Name>{name}</Name>{n !== undefined && <Count>{n}</Count>}
              </Item>
            ))}
          </List>
        </Sidebar>

        <Panel>
          <Tools>
            <Check type="checkbox" aria-label="Select all" />
            <Slot $w={22} $color="#444746" aria-label="Select options"><MdArrowDropDown size={18} /></Slot>
            <Slot $w={50} $color="#5f6368" aria-label="Refresh"><MdRefresh size={17} /></Slot>
            <Slot $w={22} $color="#444746" aria-label="More"><MdMoreVert size={17} /></Slot>
          </Tools>
          <Categories role="tablist">
            <Category $active role="tab" aria-selected><InboxFilled size={17} /><span>Primary</span></Category>
            <Category role="tab"><MdOutlineLocalOffer size={17} /><span>Promotions</span><Badge>50 new</Badge></Category>
            <Category role="tab"><MdOutlinePeopleAlt size={17} /><span>Social</span></Category>
          </Categories>
          <Content>
            <Empty>
              <h3>Your Primary tab is empty.</h3>
              <p>Personal messages and messages that don’t appear in other tabs will be shown here.</p>
              <p>To add or remove tabs click <a href="#">inbox settings</a>.</p>
            </Empty>
            <Footer>
              <div>
                <Meter><MeterFill /></Meter>
                <Storage href="#">1.36 GB of 15 GB used<MdOpenInNew size={16} /></Storage>
              </div>
              <div><a href="#">Terms</a> · <a href="#">Privacy</a> · <a href="#">Program Policies</a></div>
              <Activity>Last account activity: 13 hours ago<br /><a href="#">Details</a></Activity>
            </Footer>
          </Content>
        </Panel>

        <Rail>
          <RailButton aria-label="Calendar"><Calendar /></RailButton>
          <RailButton aria-label="Keep"><Keep /></RailButton>
          <RailButton aria-label="Tasks"><Tasks /></RailButton>
          <RailButton aria-label="Contacts"><Contacts /></RailButton>
          <RailLine />
          <RailButton aria-label="Get add-ons"><MdAdd size={20} /></RailButton>
          <Spacer />
          <RailButton aria-label="Hide side panel"><MdChevronRight size={20} /></RailButton>
        </Rail>
      </Mail>

      <Taskbar>
        <TaskButton $w={48} aria-label="Start">
          <svg width="16" height="16" viewBox="0 0 16 16" fill="#fff"><path d="M0 2.300L7 1.300V7.600H0zM7.800 1.200L16 0v7.600H7.800zM0 8.400h7v6.300L0 13.700zM7.800 8.400H16V16l-8.200-1.200z" /></svg>
        </TaskButton>
        <TaskSearch>
          <svg width="17" height="17" viewBox="0 0 17 17" fill="none" stroke="#fff" strokeWidth="1.300"><circle cx="10.500" cy="6" r="5" /><path d="M7 9.500L1 16" /></svg>
          <input type="text" placeholder="Type here to search" />
          <Ruins />
        </TaskSearch>
        <TaskButton $w={48} aria-label="Task view">
          <svg width="16" height="16" viewBox="0 0 16 16" fill="none" stroke="#fff" strokeWidth="1.200"><path d="M1 0v2.500h9.500V0M1 16v-2.500h9.500V16M1 5h9.500v6H1zM14 0v3M14 8v8" /><path d="M13 4.500h2.500v2.500H13z" fill="#fff" stroke="none" /></svg>
        </TaskButton>
        <TaskButton $w={51} aria-label="File Explorer"><Explorer /></TaskButton>
        <TaskButton aria-label="Edge"><Edge /></TaskButton>
        <TaskButton $running aria-label="Chrome"><Chrome badge="#bfe3f5"><circle cx="18.500" cy="22" r="5.800" fill="#111827" /><circle cx="18.500" cy="22" r="2" fill="#f5b98a" /></Chrome></TaskButton>
        <TaskButton $running $active aria-label="Chrome"><Chrome badge="#ec407a">D</Chrome></TaskButton>
        <TaskButton $running aria-label="Chrome"><Chrome badge="#7e57c2">m</Chrome></TaskButton>
        <TaskButton $running aria-label="Chrome"><Chrome badge="#bf360c">J</Chrome></TaskButton>
        <TaskButton $running aria-label="Zoom"><ZoomMark /></TaskButton>
        <TaskButton $running aria-label="Chrome"><Chrome badge="#d9cdbd" fg="#7a5638">SD</Chrome></TaskButton>
        <TaskButton $running aria-label="Excel"><Excel /></TaskButton>
        <TaskButton $running aria-label="Calculator"><Calc /></TaskButton>
        <TaskButton $running aria-label="Chrome"><Chrome badge="#c7d3ef"><path d="M14 27q5 4 10 0l-2-2h-6z" fill="#36c7b4" /><path d="M15 17l4 2 3-1-1 8h-3z" fill="#6b5a4a" /><path d="M18 18h3v6h-2z" fill="#fff" /></Chrome></TaskButton>
        <TaskButton $running aria-label="Telegram"><Telegram /></TaskButton>
        <TaskButton $running aria-label="Notepad"><Notepad /></TaskButton>
        <TaskButton $running aria-label="Chrome"><Chrome badge="#e9ec9a"><ellipse cx="18.500" cy="22" rx="3" ry="4.500" fill="#e3402b" /><path d="M18 24l2 4" stroke="#f39a2d" strokeWidth="2" /></Chrome></TaskButton>
        <TaskButton $running aria-label="Chrome"><Chrome badge="#455a64">M</Chrome></TaskButton>
        <TaskButton $running aria-label="Snipping Tool"><Snip /></TaskButton>
        <Spacer />
        <TrayItem aria-label="Hidden icons"><TrayIcon><path d="M3 12l6-6 6 6" /></TrayIcon></TrayItem>
        <TrayItem aria-label="Network"><TrayIcon><path d="M6 4h11v9H4V9M1.500 3.500h4v4h-4zM3.500 7.500V13M10.500 13v3M7 16h7" /></TrayIcon></TrayItem>
        <TrayItem aria-label="Meet now"><TrayIcon><path d="M4.500 6h6.500v7H4.500zM11 9l3.500-2v5L11 10.500M4.500 3.500q4.500-3 9 0M4.500 15.500q4.500 3 9 0" /></TrayIcon></TrayItem>
        <TrayItem aria-label="Microphone"><TrayIcon><rect x="6" y="1" width="6" height="11" rx="1" fill="#fff" /><path d="M3.500 8v4q0 2 2 2h7q2 0 2-2V8M9 14v3M6.500 17h5" /></TrayIcon></TrayItem>
        <TrayItem aria-label="Volume"><TrayIcon><path d="M1.500 7v4H4l4 3.500v-11L4 7zM10.500 6.500q1.500 2.500 0 5M12.700 5q2.500 4 0 8M15 3.500q3 5.500 0 11" /></TrayIcon></TrayItem>
        <Lang>ENG</Lang>
        <Clock><span>4:03 PM</span><span>9/6/2023</span></Clock>
        <Notify aria-label="1 notification">
          <svg width="28" height="28" viewBox="0 0 28 28">
            <path d="M3 6h16v12h-5l-3 3v-3H3z" fill="#fff" /><path d="M6 9.500h10M6 13h10" stroke="#211f1f" strokeWidth="1.200" />
            <circle cx="19" cy="21" r="7.500" fill="#333" stroke="#999" /><text x="19" y="25" fontSize="11" fontFamily="Open Sans, sans-serif" textAnchor="middle" fill="#fff">1</text>
          </svg>
        </Notify>
      </Taskbar>
    </Screen>
  );
}
